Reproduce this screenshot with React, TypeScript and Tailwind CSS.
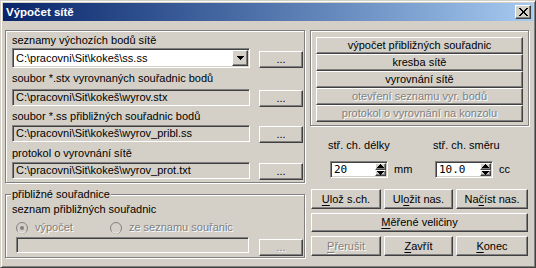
import React from "react";

const raised =
  "border border-t-white border-l-white border-r-[#404040] border-b-[#404040] shadow-[inset_-1px_-1px_0_#808080]";
const sunken =
  "border border-t-[#808080] border-l-[#808080] border-r-white border-b-white shadow-[inset_1px_1px_0_#404040,inset_-1px_-1px_0_#d4d0c8]";
const etched = "border border-[#808080] shadow-[1px_1px_0_#fff,inset_1px_1px_0_#fff]";
const dis = "text-[#808080] [text-shadow:1px_1px_0_#fff]";

function Btn({
  children,
  className = "",
  disabled = false,
}: {
  children: React.ReactNode;
  className?: string;
  disabled?: boolean;
}) {
  return (
    <div
      className={`flex items-center justify-center whitespace-nowrap ${raised} ${
        disabled ? dis : "text-black"
      } ${className}`}
    >
      {children}
    </div>
  );
}

function U({ children }: { children: React.ReactNode }) {
  return <span className="underline underline-offset-[2px]">{children}</span>;
}

function Field({ text, className = "" }: { text: string; className?: string }) {
  return (
    <div className={`${sunken} bg-[#d4d0c8] flex items-center pl-[3px] whitespace-nowrap ${className}`}>
      {text}
    </div>
  );
}

function Arrow({ up = false, color = "#000" }: { up?: boolean; color?: string }) {
  return (
    <svg width="7" height="4" viewBox="0 0 7 4">
      {up ? (
        <path d="M3 0h1v1h1v1h1v1h1v1H0V3h1V2h1V1h1z" fill={color} />
      ) : (
        <path d="M0 0h7v1H6v1H5v1H4v1H3V3H2V2H1V1H0z" fill={color} />
      )}
    </svg>
  );
}

function Spin({ value }: { value: string }) {
  return (
    <div className={`${sunken} bg-white w-[58px] h-[17px] flex items-stretch`}>
      <div className="flex-1 pl-[3px] flex items-center font-['DejaVu_Sans_Mono',monospace] text-[11px]">
        {value}
      </div>
      <div className="w-[11px] flex flex-col mr-[1px] my-[1px]">
        <div className={`${raised} bg-[#d4d0c8] flex-1 flex items-center justify-center`}>
          <Arrow up />
        </div>
        <div className={`${raised} bg-[#d4d0c8] flex-1 flex items-center justify-center`}>
          <Arrow />
        </div>
      </div>
    </div>
  );
}

function Radio({ checked = false }: { checked?: boolean }) {
  return (
    <svg width="12" height="12" viewBox="0 0 12 12">
      <circle cx="6" cy="6" r="5.5" fill="#d4d0c8" stroke="#808080" strokeWidth="1" />
      <path d="M2 9.5 A5 5 0 0 0 9.5 9.5" stroke="#fff" fill="none" />
      {checked && <circle cx="6" cy="6" r="2" fill="#808080" />}
    </svg>
  );
}

export default function App() {
  return (
    <div className="w-[536px] h-[268px] bg-[#d4d0c8] border border-t-[#d4d0c8] border-l-[#d4d0c8] border-r-[#404040] border-b-[#404040] shadow-[inset_1px_1px_0_#fff,inset_-1px_-1px_0_#808080] p-[2px] flex flex-col font-['Liberation_Sans',Arial,sans-serif] text-[11px] leading-[13px] text-black overflow-hidden">
      {/* title bar */}
      <div className="h-[18px] shrink-0 bg-linear-to-r from-[#0a246a] to-[#a6caf0] flex items-center pl-[3px] pr-[2px]">
        <span className="text-white font-bold text-[11.5px] flex-1">Výpočet sítě</span>
        <div className={`${raised} bg-[#d4d0c8] w-[16px] h-[14px] flex items-center justify-center`}>
          <svg width="9" height="8" viewBox="0 0 9 8">
            <path
              d="M0 0h2v1h1v1h1v1h1V2h1V1h1V0h2v1H8v1H7v1H6v2h1v1h1v1h1v1H7V7H6V6H5V5H4v1H3v1H2v1H0V7h1V6h1V5h1V3H2V2H1V1H0z"
              fill="#000"
            />
          </svg>
        </div>
      </div>

      {/* client */}
      <div className="flex pl-[2px] pt-[9px] gap-[5px]">
        {/* left column */}
        <div className="w-[300px] flex flex-col">
          <div className={`${etched} h-[153px] pl-[6px] pt-[3px] flex flex-col`}>
            <div>seznamy výchozích bodů sítě</div>
            <div className="flex items-start mt-[1px]">
              <div className={`${sunken} bg-white w-[238px] h-[20px] flex items-center`}>
                <div className="flex-1 pl-[3px] whitespace-nowrap">C:\pracovni\Sit\kokeš\ss.ss</div>
                <div className={`${raised} bg-[#d4d0c8] w-[16px] h-[16px] mr-[1px] flex items-center justify-center`}>
                  <Arrow />
                </div>
              </div>
              <Btn className="w-[44px] h-[17px] ml-[9px] mt-[3px] bg-[#d4d0c8]">...</Btn>
            </div>
            <div className="mt-[4px]">soubor *.stx vyrovnaných souřadnic bodů</div>
            <div className="flex items-start mt-[4px]">
              <Field text="C:\pracovni\Sit\kokeš\wyrov.stx" className="w-[238px] h-[17px]" />
              <Btn className="w-[44px] h-[17px] ml-[9px] mt-[1px]">...</Btn>
            </div>
            <div className="mt-[3px]">soubor *.ss přibližných souřadnic bodů</div>
            <div className="flex items-start mt-[2px]">
              <Field text="C:\pracovni\Sit\kokeš\wyrov_pribl.ss" className="w-[238px] h-[17px]" />
              <Btn className="w-[44px] h-[17px] ml-[9px] mt-[1px]">...</Btn>
            </div>
            <div className="mt-[4px]">protokol o vyrovnání sítě</div>
            <div className="flex items-start mt-[2px]">
              <Field text="C:\pracovni\Sit\kokeš\wyrov_prot.txt" className="w-[238px] h-[17px]" />
              <Btn className="w-[44px] h-[17px] ml-[9px] mt-[1px]">...</Btn>
            </div>
          </div>

          <div className={`${etched} relative mt-[11px] h-[64px] pl-[6px] pt-[8px] flex flex-col`}>
            <span className="absolute -top-[7px] left-[5px] bg-[#d4d0c8] px-[1px]">přibližné souřadnice</span>
            <div>seznam přibližných souřadnic</div>
            <div className="flex items-center mt-[5px] pl-[4px]">
              <Radio checked />
              <span className={`${dis} ml-[7px]`}>výpočet</span>
              <span className="ml-[37px] flex items-center">
                <Radio />
                <span className={`${dis} ml-[7px]`}>ze seznamu souřanic</span>
              </span>
            </div>
            <div className="flex items-start mt-[3px] pl-[4px]">
              <Field text="" className="w-[233px] h-[16px]" />
              <Btn disabled className="w-[44px] h-[17px] ml-[10px] mt-[2px]">...</Btn>
            </div>
          </div>
        </div>

        {/* right column */}
        <div className="w-[219px] flex flex-col">
          <div className={`${etched} h-[96px] pl-[5px] pt-[6px] flex flex-col`}>
            <Btn className="w-[207px] h-[17px]">výpočet přibližných souřadnic</Btn>
            <Btn className="w-[207px] h-[17px]">kresba sítě</Btn>
            <Btn className="w-[207px] h-[17px]">vyrovnání sítě</Btn>
            <Btn disabled className="w-[207px] h-[17px]">otevření seznamu vyr. bodů</Btn>
            <Btn disabled className="w-[207px] h-[17px]">protokol o vyrovnání na konzolu</Btn>
          </div>

          <div className="flex mt-[13px] pl-[18px]">
            <span className="w-[105px]">stř. ch. délky</span>
            <span>stř. ch. směru</span>
          </div>
          <div className="flex items-center mt-[9px] pl-[20px]">
            <Spin value="20" />
            <span className="ml-[6px] w-[41px]">mm</span>
            <Spin value="10.0" />
            <span className="ml-[6px]">cc</span>
          </div>

          <div className="flex flex-col ml-[1px] w-[217px] mt-[11px] gap-[4px]">
            <div className="flex gap-[3px]">
              <Btn className="w-[70px] h-[20px]">
                <U>U</U>lož s.ch.
              </Btn>
              <Btn className="w-[69px] h-[20px]">
                Ul<U>o</U>žit nas.
              </Btn>
              <Btn className="flex-1 h-[20px]">
                Na<U>č</U>íst nas.
              </Btn>
            </div>
            <Btn className="w-full h-[19px]">
              <U>M</U>ěřené veličiny
            </Btn>
            <div className="flex gap-[3px]">
              <Btn disabled className="w-[70px] h-[20px]">
                <U>P</U>řerušit
              </Btn>
              <Btn className="w-[69px] h-[20px]">
                <U>Z</U>avřít
              </Btn>
              <Btn className="flex-1 h-[20px]">
                <U>K</U>onec
              </Btn>
            </div>
          </div>
        </div>
      </div>
    </div>
  );
}
